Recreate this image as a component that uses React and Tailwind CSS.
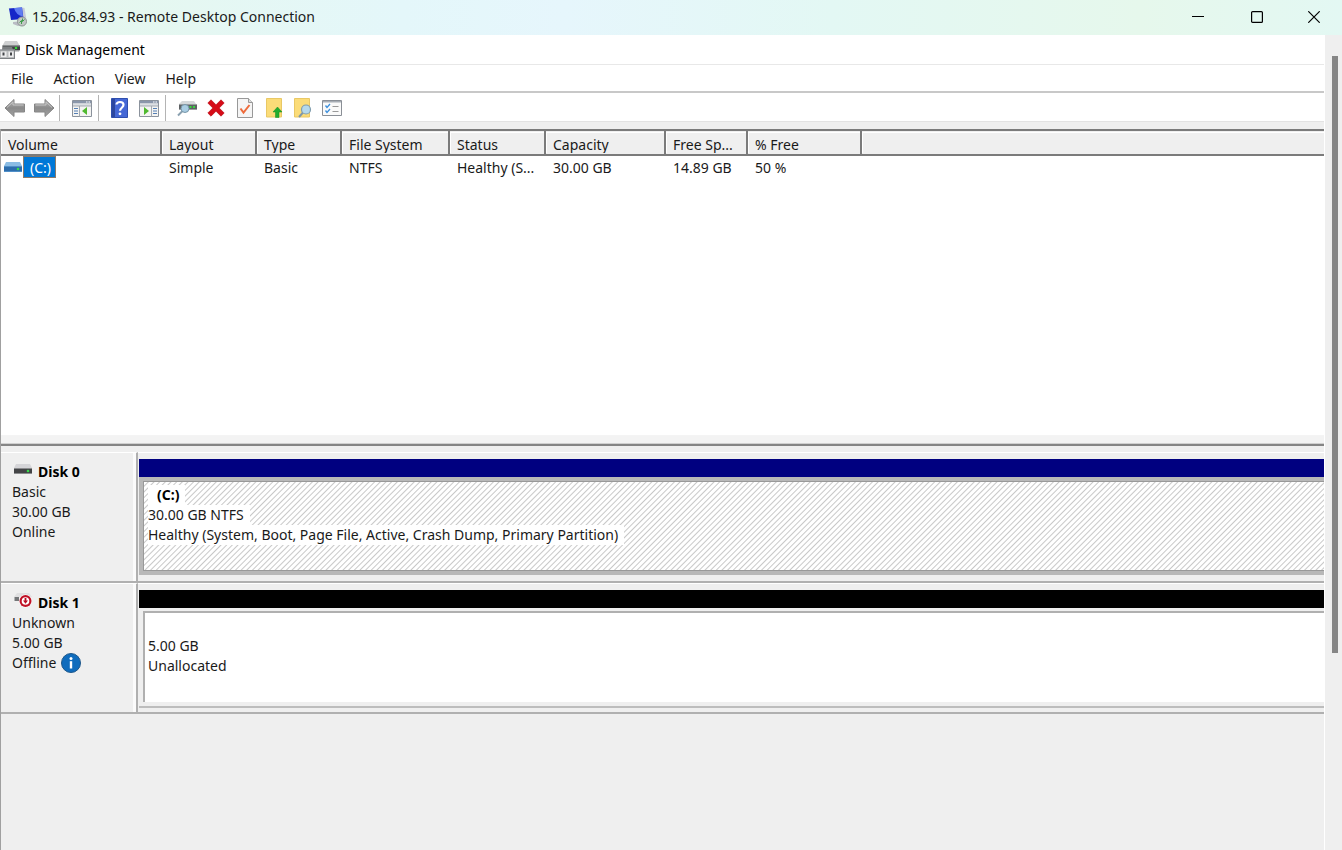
import React from "react";

const columns = [
  { name: "Volume", width: "w-[160px]" },
  { name: "Layout", width: "w-[95px]", value: "Simple" },
  { name: "Type", width: "w-[85px]", value: "Basic" },
  { name: "File System", width: "w-[108px]", value: "NTFS" },
  { name: "Status", width: "w-[96px]", value: "Healthy (S..." },
  { name: "Capacity", width: "w-[120px]", value: "30.00 GB" },
  { name: "Free Sp...", width: "w-[82px]", value: "14.89 GB" },
  { name: "% Free", width: "w-[114px]", value: "50 %" },
];

function RemoteIcon() {
  return (
    <svg viewBox="0 0 20 20" className="size-5" aria-hidden="true">
      <path d="M5 15l9-1 2 4-6 1-5-2z" fill="#b9bcc4" />
      <path d="M0.500 1.500L14 0.500l2.500 0.500 2 12-5 1z" fill="#c6cbd8" />
      <path d="M1 1.500L14 0.500l1.500 11.500L3 13z" fill="#1526c8" />
      <path d="M6 1.100L14 0.500l1 9q-7-1-9-8.400z" fill="#5f7cf0" />
      <circle cx="14" cy="14.500" r="4.500" fill="#c3c8c6" stroke="#8e9694" />
      <path d="M11.500 15.500l2-2v3.500M16.500 12.500l-2 2v-3" fill="none" stroke="#3f9e4c" />
    </svg>
  );
}

function DiskManagementIcon() {
  return (
    <svg viewBox="0 0 20 20" className="size-5" aria-hidden="true">
      <path d="M5 1h12l2.500 4.500H2.500z" fill="#cfd0d1" />
      <path d="M2.500 5.500h17.500V10H2.500z" fill="#3d3f41" />
      <path d="M2.500 5.500h17.500v1H2.500z" fill="#85888a" />
      <path d="M14 10h6l-1 1.500h-5z" fill="#9b9d9f" />
      <circle cx="16" cy="8" r="1.300" fill="#38d83c" />
      <path d="M3 7h9l1 3H2z" fill="#7c7f81" />
      <path d="M0 9.500h15V19H0z" fill="#b9bbbd" />
      <path d="M0 9.500h15v1H0zM0 18h15v1H0zM14 10h1v9h-1z" fill="#7d8083" />
      <path d="M1 11.500h5.500V17H1zM8.500 11.500h5V17h-5z" fill="#ededee" />
      <path d="M2.500 12.500h2v3h-2zM10 12.500h2v3h-2z" fill="#424548" />
    </svg>
  );
}

function ArrowIcon({ flip }) {
  return (
    <svg viewBox="0 0 22 20" className={flip ? "h-5 w-[22px] -scale-x-100" : "h-5 w-[22px]"} aria-hidden="true">
      <defs>
        <linearGradient id={flip ? "forward" : "back"} x1="0" y1="0" x2="0" y2="1">
          <stop offset="0" stopColor="#b9b9b9" />
          <stop offset="0.500" stopColor="#8a8a8a" />
          <stop offset="1" stopColor="#a4a4a4" />
        </linearGradient>
      </defs>
      <path d="M1 10L10 1.500V6h10.500v8H10v4.500z" fill={flip ? "url(#forward)" : "url(#back)"} stroke="#858585" strokeLinejoin="round" />
      <path d="M3 9.500l6-5.500V7h10.500" fill="none" stroke="#c4c4c4" />
    </svg>
  );
}

function PaneIcon({ right }) {
  return (
    <svg viewBox="0 0 20 17" className="h-[17px] w-5" aria-hidden="true">
      <path d="M0.500 0.500h19v16h-19z" fill="#f4f4f2" stroke="#8b929c" />
      <path d="M1 1h18v2.500H1z" fill="#8a96aa" />
      <path d="M14 1.500h1.500v1H14zM16.500 1.500H18v1h-1.500z" fill="#fff" />
      <path d="M1 3.500h18V6H1z" fill="#dcdfe3" />
      <path d="M1 6h18" stroke="#a3a9b1" />
      {right ? (
        <>
          <path d="M12.500 6v10.500" stroke="#a3a9b1" />
          <path d="M14 8.500h4M14 11h4M14 13.500h4" stroke="#557fb5" strokeWidth="1.200" />
          <path d="M5 7v8l5-4z" fill="#4fb92f" />
        </>
      ) : (
        <>
          <path d="M7.500 6v10.500" stroke="#a3a9b1" />
          <path d="M2 8.500h4M2 11h4M2 13.500h4" stroke="#557fb5" strokeWidth="1.200" />
          <path d="M15 7v8l-5-4z" fill="#4fb92f" />
        </>
      )}
    </svg>
  );
}

function HelpIcon() {
  return (
    <svg viewBox="0 0 17 20" className="h-5 w-[17px]" aria-hidden="true">
      <path d="M0.500 0.500h16v19h-16z" fill="#4568d6" stroke="#2f4fae" />
      <path d="M1 1h3v18H1z" fill="#2c479f" />
      <path d="M5.500 6.500C5.500 3.200 12.500 3 12.500 6.800c0 3-3.500 2.900-3.500 6" fill="none" stroke="#fff" strokeWidth="2.200" />
      <circle cx="9" cy="15.800" r="1.400" fill="#fff" />
    </svg>
  );
}

function RescanIcon() {
  return (
    <svg viewBox="0 0 20 20" className="size-5" aria-hidden="true">
      <path d="M5 3h12l2 3H2z" fill="#d5d8da" />
      <path d="M2 6h18v6H2z" fill="#5d6163" />
      <path d="M2 6h18v1H2zM2 11h18v1H2z" fill="#9a9ea0" />
      <path d="M12.500 8h2v2h-2zM16 8h2v2h-2z" fill="#38d640" />
      <path d="M5.500 13L1 17.500" stroke="#8aa0b0" strokeWidth="2" />
      <circle cx="8" cy="10.500" r="4" fill="#a9cde3" stroke="#7896a8" />
    </svg>
  );
}

function DeleteIcon() {
  return (
    <svg viewBox="0 0 18 18" className="size-[18px]" aria-hidden="true">
      <path d="M4 0.800L9 5.800l5-5L17.200 4l-5 5 5 5-3.200 3.200-5-5-5 5L0.800 14l5-5-5-5z" fill="#d60b17" stroke="#b00812" strokeWidth="0.600" />
    </svg>
  );
}

function CheckPageIcon() {
  return (
    <svg viewBox="0 0 16 20" className="h-5 w-4" aria-hidden="true">
      <path d="M0.500 0.500h11l4 4v15h-15z" fill="#f5f5f5" stroke="#989898" />
      <path d="M11.500 0.500v4h4" fill="#ddd" stroke="#989898" />
      <path d="M3.500 10.500l3 4L12.500 7" fill="none" stroke="#ee6b3b" strokeWidth="2" />
    </svg>
  );
}

function FolderUpIcon() {
  return (
    <svg viewBox="0 0 18 20" className="h-5 w-[18px]" aria-hidden="true">
      <path d="M1.500 0.500h15v18.500h-15z" fill="#fbdc78" stroke="#e9c865" />
      <path d="M12.500 9l4.500 5h-3v5.500h-3.500V14H8z" fill="#22ad2e" stroke="#158c20" strokeWidth="0.500" />
    </svg>
  );
}

function FolderSearchIcon() {
  return (
    <svg viewBox="0 0 19 20" className="h-5 w-[19px]" aria-hidden="true">
      <path d="M1.500 0.500h15v18.500h-15z" fill="#fbdc78" stroke="#e9c865" />
      <path d="M10 14.500l-4 4.500" stroke="#8098a7" strokeWidth="2" />
      <circle cx="13" cy="11.500" r="4.500" fill="#b5d9ec" stroke="#809dad" strokeWidth="1.200" />
    </svg>
  );
}

function ChecklistIcon() {
  return (
    <svg viewBox="0 0 20 16" className="h-4 w-5" aria-hidden="true">
      <path d="M0.500 0.500h19v15h-19z" fill="#fafafa" stroke="#8a8f96" />
      <path d="M1 1h18v1.500H1z" fill="#a7adb5" />
      <path d="M3.500 5.500L5 7.500l3-3.500M3.500 10.500L5 12.500 8 9" fill="none" stroke="#3b8fdd" strokeWidth="1.300" />
      <path d="M10.500 6.500h6M10.500 11.500h6" stroke="#999" />
    </svg>
  );
}

function DriveIcon({ blue }) {
  return (
    <svg viewBox="0 0 18 11" className="h-[11px] w-[18px]" aria-hidden="true">
      <path d="M2 0h14l2 4H0z" fill={blue ? "#8abce4" : "#d5d5d8"} />
      <path d="M0 4h18v6H0z" fill={blue ? "#2d6dac" : "#434446"} />
      <path d="M0 4h18v1H0zM0 9h18v1H0z" fill={blue ? "#508fc8" : "#8b8c8e"} />
      <circle cx="14" cy="7" r="1.300" fill="#38da4c" />
    </svg>
  );
}

function OfflineDriveIcon() {
  return (
    <svg viewBox="0 0 18 16" className="h-4 w-[18px]" aria-hidden="true">
      <path d="M3 1h12l3 4H0z" fill="#dfdfe0" />
      <path d="M0.500 5H5v4H0.500z" fill="#747678" />
      <circle cx="11.500" cy="9" r="6.500" fill="#fff" />
      <circle cx="11.500" cy="9" r="6" fill="#c01226" />
      <circle cx="11.500" cy="9" r="3.800" fill="#fff" />
      <path d="M10.600 6h1.800v2.500H14L11.500 11.800 9 8.500h1.600z" fill="#b90e24" />
    </svg>
  );
}

function InfoIcon() {
  return (
    <svg viewBox="0 0 20 20" className="size-5" aria-hidden="true">
      <circle cx="10" cy="10" r="9.500" fill="#0f6cbd" stroke="#1d578b" />
      <circle cx="10" cy="5.500" r="1.500" fill="#fff" />
      <path d="M8.800 8.200h2.400v7.300H8.800z" fill="#fff" />
    </svg>
  );
}

function Tool({ label, children }) {
  return (
    <button type="button" aria-label={label} title={label} className="flex h-[26px] w-[29px] items-center justify-center">
      {children}
    </button>
  );
}

function Separator() {
  return <div className="h-[26px] w-px bg-[#b4b4b4]" />;
}

function TitleBar() {
  return (
    <header className="flex h-[35px] shrink-0 items-center bg-[linear-gradient(to_right,#e6f8eb_0%,#e4f7fa_30%,#e6f6fc_42%,#e3f8f4_62%,#e6f8ec_85%,#e3f8f3_100%)] pb-0.5 pl-2">
      <RemoteIcon />
      <h1 className="ml-1 flex-1 text-sm">15.206.84.93 - Remote Desktop Connection</h1>
      <button type="button" aria-label="Minimize" className="flex h-8 w-[59px] items-center justify-center">
        <svg viewBox="0 0 12 12" className="size-3"><path d="M0 5.500h12" stroke="#000" /></svg>
      </button>
      <button type="button" aria-label="Maximize" className="flex h-8 w-[59px] items-center justify-center">
        <svg viewBox="0 0 12 12" className="size-3"><rect x="0.600" y="0.600" width="10.800" height="10.800" rx="1" fill="none" stroke="#000" strokeWidth="1.200" /></svg>
      </button>
      <button type="button" aria-label="Close" className="flex h-8 w-14 items-center justify-center">
        <svg viewBox="0 0 12 12" className="size-3"><path d="M0.300 0.300l11.400 11.400M11.700 0.300L0.300 11.700" stroke="#000" strokeWidth="1.200" /></svg>
      </button>
    </header>
  );
}

function Toolbar() {
  return (
    <div role="toolbar" className="flex h-[29px] items-center border-b border-[#e3e3e3] bg-white pt-0.5">
      <Tool label="Back"><ArrowIcon /></Tool>
      <Tool label="Forward"><ArrowIcon flip /></Tool>
      <div className="w-px" />
      <Separator />
      <div className="w-[7px]" />
      <Tool label="Show or hide console tree"><PaneIcon /></Tool>
      <div className="w-0.5" />
      <Separator />
      <div className="w-1.5" />
      <Tool label="Help"><HelpIcon /></Tool>
      <Tool label="Show or hide action pane"><PaneIcon right /></Tool>
      <div className="w-0.5" />
      <Separator />
      <div className="w-1.5" />
      <Tool label="Rescan disks"><RescanIcon /></Tool>
      <Tool label="Delete"><DeleteIcon /></Tool>
      <Tool label="Properties"><CheckPageIcon /></Tool>
      <Tool label="Open"><FolderUpIcon /></Tool>
      <Tool label="Explore"><FolderSearchIcon /></Tool>
      <Tool label="Settings"><ChecklistIcon /></Tool>
    </div>
  );
}

function VolumeList() {
  return (
    <section className="h-[306px] bg-white">
      <table className="w-full table-fixed border-collapse text-left">
        <colgroup>
          {columns.map((c) => <col key={c.name} className={c.width} />)}
          <col />
        </colgroup>
        <thead>
          <tr className="h-[25px] bg-[#efefef]">
            {columns.map((c) => (
              <th key={c.name} className="border-y-2 border-r-2 border-y-[#7b7b7b] border-r-[#7b7b7b] p-0 font-normal">
                <div className="h-[21px] overflow-hidden border-t border-l border-white pl-1.5 leading-[24px] whitespace-nowrap">{c.name}</div>
              </th>
            ))}
            <th aria-label="Empty" className="border-y-2 border-[#7b7b7b] p-0">
              <div className="h-[21px] border-t border-l border-white" />
            </th>
          </tr>
        </thead>
        <tbody>
          <tr className="h-[23px]">
            {columns.map((c, i) => (
              <td key={c.name} className="p-0">
                {i === 0 ? (
                  <div className="flex h-[22px] items-center pl-[3px]">
                    <DriveIcon blue />
                    <span className="ml-px h-[22px] border border-[#8b7b6b] bg-[#0078d7] pr-1 pl-1.5 leading-[22px] text-white">(C:)</span>
                  </div>
                ) : (
                  <div className="h-[22px] overflow-hidden pl-2 leading-[24px] whitespace-nowrap">{c.value}</div>
                )}
              </td>
            ))}
            <td />
          </tr>
        </tbody>
      </table>
    </section>
  );
}

function DiskRow({ icon, name, lines, info, bar, children }) {
  return (
    <article className="flex h-[131px]">
      <div className="w-[137px] shrink-0 border-t border-r-2 border-b-2 border-t-white border-r-[#b0b0b0] border-b-[#b0b0b0] pt-[9px] pl-[11px] shadow-[inset_-3px_0_0_#fbfbfb]">
        <div className="flex h-5 items-center gap-1.5">
          <div className="-mt-1.5 ml-0.5 flex h-4 items-center">{icon}</div>
          <h2 className="font-bold text-black">{name}</h2>
        </div>
        {lines.map((line) => <p key={line}>{line}</p>)}
        {info}
      </div>
      <div className="flex min-w-0 flex-1 flex-col border-t border-b-2 border-t-white border-b-[#b0b0b0] pt-1.5 pl-px">
        <div className={bar} />
        {children}
      </div>
    </article>
  );
}

export default function App() {
  return (
    <div className="flex min-h-screen flex-col bg-[#efefef] font-['Noto_Sans','Open_Sans',sans-serif] text-sm leading-5 text-[#1a1a1a]">
      <TitleBar />
      <div className="flex flex-1">
        <main className="flex min-w-0 flex-1 flex-col">
          <div className="flex h-[30px] items-center gap-[5px] border-b border-[#e8e8e8] bg-white">
            <DiskManagementIcon />
            <span className="text-black">Disk Management</span>
          </div>
          <nav className="flex h-7 items-center gap-5 border-b-2 border-[#c8c8c8] bg-white pt-0.5 pl-[11px]">
            <button type="button">File</button>
            <button type="button">Action</button>
            <button type="button">View</button>
            <button type="button">Help</button>
          </nav>
          <Toolbar />
          <div className="h-[7px]" />
          <div className="flex flex-1 flex-col border-l border-[#a0a0a0]">
            <VolumeList />
            <div className="h-[9px] border-y border-t-[#f4f4f4] border-b-[#d0d0d0] bg-[#f3f3f3]" />
            <div className="mb-1.5 h-0.5 bg-[#858585]" />
            <DiskRow icon={<DriveIcon />} name="Disk 0" lines={["Basic", "30.00 GB", "Online"]} bar="h-[18px] bg-[#000080]">
              <div className="h-[98px] border-y-4 border-l-4 border-[#b8b8b8]">
                <div className="h-full border-y border-l border-[#999] bg-white bg-[repeating-linear-gradient(135deg,#fff_0px,#fff_2px,#c8c8c8_3px,#fff_4px)] pt-[3px] pl-1">
                  <p className="w-fit bg-white pr-1.5 pl-[9px] font-bold text-black">(C:)</p>
                  <p className="w-fit bg-white pr-1.5">30.00 GB NTFS</p>
                  <p className="w-fit bg-white pr-1.5">Healthy (System, Boot, Page File, Active, Crash Dump, Primary Partition)</p>
                </div>
              </div>
            </DiskRow>
            <DiskRow
              icon={<OfflineDriveIcon />}
              name="Disk 1"
              lines={["Unknown", "5.00 GB"]}
              info={<p className="flex items-center gap-[5px]">Offline <InfoIcon /></p>}
              bar="h-[18px] bg-black"
            >
              <div className="h-[100px] border-b-2 border-[#bdbdbd] pt-[3px] pb-1 pl-1">
                <div className="h-full border-t-2 border-l-2 border-[#b0b0b0] bg-white pt-[23px] pl-[3px]">
                  <p>5.00 GB</p>
                  <p>Unallocated</p>
                </div>
              </div>
            </DiskRow>
          </div>
        </main>
        <div className="w-[18px] shrink-0 border-l border-white bg-[#efefef] pt-[21px] pl-[7px]">
          <div className="h-[597px] w-1.5 bg-[#868686]" />
        </div>
      </div>
    </div>
  );
}
